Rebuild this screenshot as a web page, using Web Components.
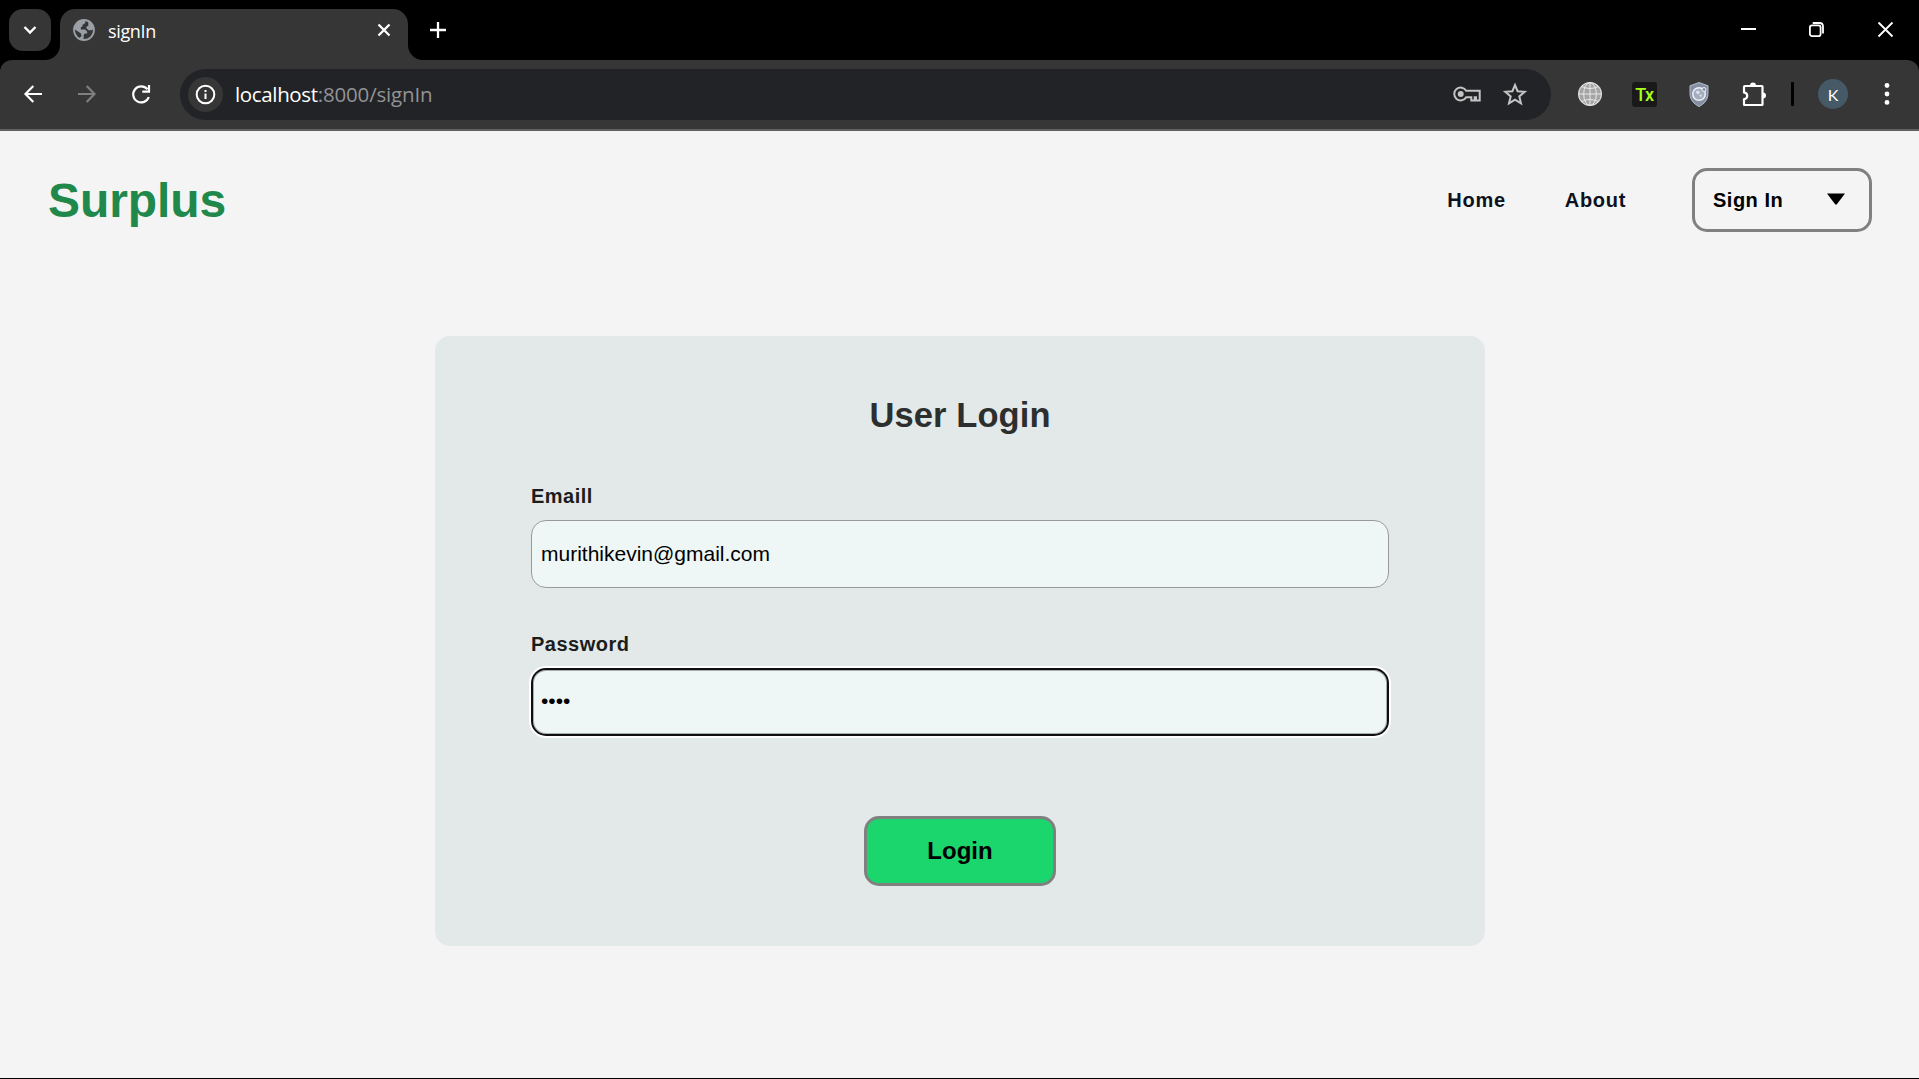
<!DOCTYPE html>
<html lang="en">
<head>
<meta charset="utf-8">
<title>signIn</title>
<style>
html,body{margin:0;height:100%;background:#000}
body{font-family:"Liberation Sans",Arial,sans-serif;overflow:hidden}
</style>
</head>
<body>
<browser-window></browser-window>
<script>
const define=(name,html)=>customElements.define(name,class extends HTMLElement{
  constructor(){super();this.attachShadow({mode:'open'}).innerHTML='<style>*{box-sizing:border-box}svg{display:block;overflow:visible;flex:none}</style>'+html;}
});

define('tab-strip',`
<style>
:host{display:flex;height:60px;background:#000;align-items:flex-start;color:#fff}
.search{width:42px;height:42px;margin:9px 0 0 9px;border-radius:14px;background:#363636}
.tab{position:relative;display:flex;width:348px;height:51px;margin:9px 0 0 9px;background:#363636;border-radius:15px 15px 0 0}
.tab::before,.tab::after{content:"";position:absolute;bottom:0;width:15px;height:15px}
.tab::before{left:-15px;background:radial-gradient(circle at 0 0,transparent 14.5px,#363636 15.5px)}
.tab::after{right:-15px;background:radial-gradient(circle at 100% 0,transparent 14.5px,#363636 15.5px)}
.fav{margin:10px 0 0 13px}
.t{flex:1;margin-left:13px;font:18px/24px "Open Sans","Noto Sans",sans-serif;margin-top:10px;letter-spacing:-.35px;white-space:nowrap}
.x{margin:14px 17px 0 0}
.plus{margin:21px 0 0 22px}
.win{margin:22px 0 0 auto;display:flex;padding-right:26px;gap:54px}
.min{margin-right:-1px}
</style>
<div class="search"><svg width="42" height="42" fill="none" stroke="#fff" stroke-width="2.4"><path d="M15.500 18 21 23.500 26.500 18"/></svg></div>
<div class="tab">
<svg class="fav" width="22" height="22" viewBox="0 0 22 22"><circle cx="11" cy="11" r="10" fill="#363636" stroke="#9aa0a6" stroke-width="1.8"/><path fill="#9aa0a6" d="M1.500 10.200 A9.500 9.500 0 0 1 10 1.300 L12.200 1.800V4L10.400 5.600H9.500V7.400L7.800 8.300V10.400H12.200L14.200 12.700V14.600H11.800L10.600 16.200V20.600C8 20.900 6.300 20 5.900 19.300L8.300 17.600V14.700L3.500 11.500ZM15.300 2.300C18.500 3.600 20.300 6.300 20.700 9.900L18.900 11.300H15.600L13.500 9.400V7.300H15.300Z"/></svg>
<div class="t">signIn</div>
<svg class="x" width="14" height="14" stroke="#fff" stroke-width="2.3"><path d="M1.500 1.500 12.500 12.500M12.500 1.500 1.500 12.500"/></svg>
</div>
<svg class="plus" width="16" height="18" stroke="#fff" stroke-width="2.3"><path d="M0 9H16M8 1V17"/></svg>
<div class="win">
<svg class="min" width="15" height="15" stroke="#fff" stroke-width="2"><path d="M0 7H15"/></svg>
<svg width="15" height="15" fill="none" stroke="#fff" stroke-width="1.8"><rect x=".9" y="3.400" width="10.700" height="10.700" rx="2.200"/><path d="M3.700 1H10.500Q14 1 14 4.500V11.500"/></svg>
<svg width="15" height="15" stroke="#fff" stroke-width="1.800"><path d="M.5.5 14.500 14.500M14.500.5.5 14.500"/></svg>
</div>`);

define('address-bar',`
<style>
:host{display:flex;flex:1;height:51px;border-radius:26px;background:#222327;align-items:center}
.i{width:35px;height:35px;border-radius:50%;background:#363636;margin-left:8px}
.u{font:20.5px/28px "Open Sans","Noto Sans",sans-serif;margin:0 auto 0 12px;color:#fff;white-space:nowrap}
.h{letter-spacing:-.35px}.r{color:#929395;letter-spacing:-.17px}
.key{margin-right:22px}.star{margin-right:24px}
</style>
<div class="i"><svg width="35" height="35" fill="none" stroke="#fff" stroke-width="2"><circle cx="17.500" cy="17.500" r="8.800"/><path d="M17.500 16.500V22M17.500 13V15"/></svg></div>
<div class="u"><span class="h">localhost</span><span class="r">:8000/signIn</span></div>
<svg class="key" width="28" height="16" fill="none" stroke="#c4c4c4" stroke-width="2"><path d="M13.200 4.800A6.400 6.400 0 1 0 13.200 11.200H18.300V14.500H21.700V11.200H23V14.500H26.700V4.800Z"/><circle cx="7.700" cy="8" r="3" fill="#c4c4c4" stroke="none"/></svg>
<svg class="star" width="24" height="24" viewBox="0 0 24 24" fill="none" stroke="#c4c4c4" stroke-width="2"><path d="M12 3 14.600 9.200 21.700 9.800 16.300 14.400 18 21.300 12 17.600 6 21.300 7.700 14.400 2.300 9.800 9.400 9.200Z"/></svg>`);

define('tool-bar',`
<style>
:host{display:block;background:#000}
.bar{display:flex;align-items:center;height:71px;padding:0 29px 1px 24px;background:#363636;border-bottom:2px solid #616161;border-radius:12px 12px 0 0}
.back{margin-right:36px}.fwd{margin-right:36px}.re{margin-right:29px}
.tx{width:25px;height:25px;border-radius:3px;background:#191919;color:#a8ff1c;font:500 18px/25px Roboto,sans-serif;text-align:center;margin-left:30px;letter-spacing:-.5px}
.k{width:30px;height:30px;border-radius:50%;background:#455a66;color:#fff;font:16px/31px Lato,sans-serif;text-align:center;margin-left:24px}
.d{width:3px;height:24px;background:#000;border-radius:1px;margin-left:24px}
</style>
<div class="bar">
<svg class="back" width="18" height="18" fill="none" stroke="#fff" stroke-width="2.200"><path d="M18 9H1.500M9.300 1 1.500 9 9.300 17"/></svg>
<svg class="fwd" width="18" height="18" fill="none" stroke="#7f7f7f" stroke-width="2.200"><path d="M0 9H16.500M8.700 1 16.500 9 8.700 17"/></svg>
<svg class="re" width="19" height="19" fill="none" stroke="#fff" stroke-width="2.200"><path d="M15.400 4.300A8 8 0 1 0 16.800 12M17 0V6.700H10.300"/></svg>
<address-bar></address-bar>
<svg width="24" height="24" style="margin-left:27px"><circle cx="12" cy="12" r="12" fill="#a5a5a5"/><g fill="none" stroke="#e8e8e8" stroke-width="1"><circle cx="12" cy="12" r="11.400"/><ellipse cx="12" cy="12" rx="6.300" ry="11.500"/><path d="M12 0V24M.5 12H23.500M3.500 4.500Q12 8.500 20.500 4.500M3.500 19.500Q12 15.500 20.500 19.500"/></g></svg>
<div class="tx">Tx</div>
<svg width="20" height="25" style="margin-left:32px"><path d="M10 .5 19 3.800V11.500C19 18 15 22 10 24.500 5 22 1 18 1 11.500V3.800Z" fill="#8690a4" stroke="#b4bdcd"/><circle cx="10" cy="12" r="6.300" fill="#a3adbd" stroke="#eef1f6" stroke-width="1.500"/><path d="M6.500 9.500 9.500 8.500 11 11 8.500 12.500ZM10 13 13 12.500 12 15.500Z" fill="#dce3ec"/><circle cx="15" cy="7.500" r="2" fill="#8690a4" stroke="#eef1f6"/></svg>
<svg width="25" height="25" style="margin-left:33px" fill="none" stroke="#fff" stroke-width="2.200"><path d="M3 4H20Q20.500 4 20.500 4.500V22.500Q20.500 23 20 23H2.500Q2 23 2 22.500V17.300C6.300 16.500 6.300 11 2 10.300V5Q2 4 3 4Z"/><path d="M8 3.500A3 3 0 0 1 14 3.500ZM21 10.500A3 3 0 0 1 21 16.500Z" fill="#fff" stroke="none"/></svg>
<div class="d"></div>
<div class="k">K</div>
<svg width="6" height="22" style="margin-left:36px" fill="#fff"><circle cx="3" cy="2.500" r="2.400"/><circle cx="3" cy="11" r="2.400"/><circle cx="3" cy="19.400" r="2.400"/></svg>
</div>`);

define('site-header',`
<style>
:host{display:flex;align-items:center;height:138px;padding:0 47px 0 48px;font-weight:bold}
.logo{font-size:48px;line-height:56px;color:#1f884a;letter-spacing:-.1px;margin:2px auto 0 0}
.n{font-size:20px;line-height:24px;color:#0b1220;letter-spacing:.7px;margin-right:59px}
.n+.n{margin-right:60px}
.b{width:180px;height:64px;border:3px solid #808080;border-radius:15px;display:flex;align-items:center;justify-content:space-between;padding:0 24px 0 18px;font-size:20px;line-height:24px;letter-spacing:.5px;margin-left:6px}
</style>
<div class="logo">Surplus</div><div class="n">Home</div><div class="n">About</div>
<div class="b"><span>Sign In</span><svg width="18" height="14"><path d="M0 .5H18L9.700 11.500H8.300Z"/></svg></div>`);

define('form-field',`
<style>
:host{display:block;color:#1c1c1c}
.l{font-weight:bold;font-size:20px;line-height:24px;letter-spacing:.5px}
.f{height:68px;margin-top:12px;border:1px solid #999;border-radius:15px;background:#eef7f6;color:#000;font-size:21px;line-height:66px;padding-left:9px}
:host([focused]) .f{border:2px solid #101010;box-shadow:0 0 0 2px #fff,inset 0 0 0 1px #a6adac;line-height:62px;padding-left:8px}
</style>
<div class="l"><slot name="label"></slot></div><div class="f"><slot></slot></div>`);

define('login-card',`
<style>
:host{display:flex;flex-direction:column;align-items:stretch;width:1050px;height:610px;margin:67px 0 0 435px;padding:59px 96px 60px;border-radius:15px;background:#e2e9e8}
h1{margin:0 0 49px;font-size:34.5px;line-height:40px;text-align:center;color:#2d2f2f;letter-spacing:.1px}
form-field+form-field{margin-top:44px}
.b{align-self:center;width:192px;height:70px;margin-top:80px;border:3px solid #808080;border-radius:15px;background:#1bd56d;font:bold 24px/64px "Liberation Sans",sans-serif;text-align:center;color:#000}
</style>
<h1>User Login</h1>
<form-field><span slot="label">Emaill</span>murithikevin@gmail.com</form-field>
<form-field focused><span slot="label">Password</span>••••</form-field>
<div class="b">Login</div>`);

define('browser-window',`
<style>
:host{display:flex;flex-direction:column;width:1919px;height:1079px;background:#000}
main{height:947px;background:#f4f4f4}
</style>
<tab-strip></tab-strip><tool-bar></tool-bar>
<main><site-header></site-header><login-card></login-card></main>`);
</script>
</body>
</html>
